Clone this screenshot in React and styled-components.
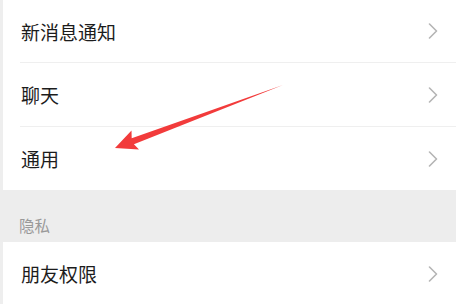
import React from "react";
import styled, { createGlobalStyle } from "styled-components";

const Global = createGlobalStyle`
  html, body { margin: 0; padding: 0; background: #ffffff; }
  body { font-family: "Noto Sans CJK SC", "Noto Sans", sans-serif; overflow: hidden; }
`;

const Page = styled.div`
  position: relative;
  width: 456px;
  height: 304px;
  overflow: hidden;
  display: flex;
  background: #ffffff;
`;

const Edge = styled.div`
  width: 3px;
  flex: none;
  background: #eeeeee;
`;

const List = styled.div`
  flex: 1;
  display: flex;
  flex-direction: column;
`;

const Row = styled.div`
  height: ${(p) => p.$h || 63}px;
  flex: none;
  display: flex;
  align-items: center;
  justify-content: space-between;
  padding: 0 18px 0 18px;
  background: #ffffff;
`;

const Label = styled.span`
  font-size: 19px;
  color: #1c1c1c;
  line-height: 1;
`;

const Divider = styled.div`
  height: 1px;
  flex: none;
  margin-left: 17px;
  background: #efefef;
`;

const SectionHeader = styled.div`
  height: 52px;
  flex: none;
  background: #ededed;
  display: flex;
  align-items: flex-end;
  padding: 0 0 9px 16px;
  box-sizing: border-box;
  margin-left: -3px;
  padding-left: 19px;
`;

const SectionTitle = styled.span`
  font-size: 15.5px;
  color: #999999;
  line-height: 1;
`;

const Overlay = styled.svg`
  position: absolute;
  left: 0;
  top: 0;
  pointer-events: none;
`;

const Chevron = () => (
  <svg width="10" height="16" viewBox="0 0 10 16">
    <path d="M1.5 1 L8.5 8 L1.5 15" fill="none" stroke="#b5b5b5" strokeWidth="1.6" strokeLinecap="round" strokeLinejoin="round" />
  </svg>
);

const Item = ({ label, h }) => (
  <Row $h={h}>
    <Label>{label}</Label>
    <Chevron />
  </Row>
);

export default function App() {
  return (
    <>
      <Global />
      <Page>
        <Edge />
        <List>
          <Item label="新消息通知" h={62} />
          <Divider />
          <Item label="聊天" />
          <Divider />
          <Item label="通用" />
          <SectionHeader>
            <SectionTitle>隐私</SectionTitle>
          </SectionHeader>
          <Item label="朋友权限" />
        </List>
        <Overlay width="456" height="304" viewBox="0 0 456 304">
          <polygon
            points="115,148 131.5,130.5 131.7,138.3 283,85 133.9,144.3 139,149.5"
            fill="#f23b3b"
          />
        </Overlay>
      </Page>
    </>
  );
}
